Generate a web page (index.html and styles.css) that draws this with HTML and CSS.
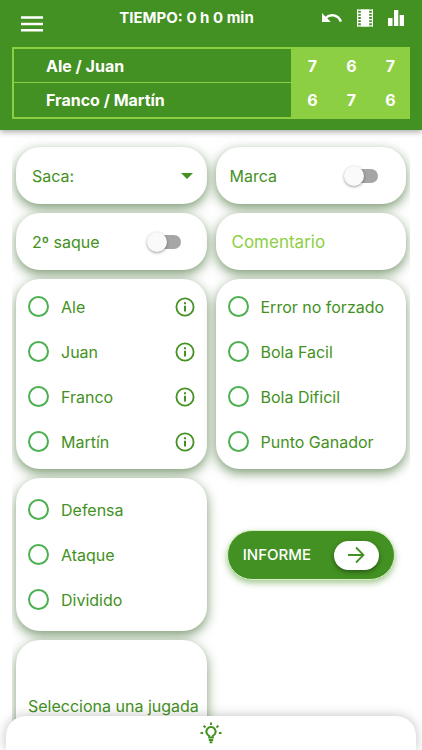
FILE: index.html
```
<!DOCTYPE html>
<html lang="es">

<head>
    <meta charset="UTF-8">
    <meta name="viewport" content="width=device-width, initial-scale=1.0">
    <title>Partido</title>
    <link rel="stylesheet" href="styles.css">
</head>

<body>
    <header class="header">
        <div class="toolbar">
            <button class="icon-btn menu-btn" aria-label="Menú">
                <svg width="22" height="16" viewBox="0 0 22 16"><path d="M0 1.5h22M0 8h22M0 14.2h22" stroke="currentColor" stroke-width="2.4"/></svg>
            </button>
            <h1 class="time">TIEMPO: 0 h 0 min</h1>
            <div class="actions">
                <button class="icon-btn" aria-label="Deshacer">
                    <svg width="20" height="24" viewBox="2 0 20.5 24"><path fill="currentColor" d="M12.5 8c-2.65 0-5.05.99-6.9 2.6L2 7v9h9l-3.62-3.62c1.39-1.16 3.16-1.88 5.12-1.88 3.54 0 6.55 2.31 7.6 5.5l2.37-.78C21.08 11.03 17.15 8 12.5 8z"/></svg>
                </button>
                <button class="icon-btn" aria-label="Video">
                    <svg width="16" height="18" viewBox="0 0 16 18">
                        <path fill="currentColor" d="M3.8 .5h8.400v17h-8.400z"/>
                        <path d="M.6 .5v17M15.4 .5v17" stroke="currentColor" stroke-width="1.2"/>
                        <path d="M0 1.200h16M0 4.300h16M0 7.400h16M0 10.600h16M0 13.700h16M0 16.800h16" stroke="currentColor" stroke-width="1.2"/>
                    </svg>
                </button>
                <button class="icon-btn" aria-label="Estadísticas">
                    <svg width="16" height="16" viewBox="0 0 16 16"><path fill="currentColor" d="M0 8h4.5v8H0zM6 0h4.3v16H6zM11.7 5H16v11h-4.3z"/></svg>
                </button>
            </div>
        </div>
        <table class="score">
            <tr>
                <th scope="row">Ale / Juan</th>
                <td>7</td>
                <td>6</td>
                <td>7</td>
            </tr>
            <tr>
                <th scope="row">Franco / Martín</th>
                <td>6</td>
                <td>7</td>
                <td>6</td>
            </tr>
        </table>
    </header>

    <main class="content">
        <div class="column">
            <div class="card field saca">
                <select class="select" aria-label="Saca">
                    <option>Saca:</option>
                    <option>Ale</option>
                    <option>Juan</option>
                    <option>Franco</option>
                    <option>Martín</option>
                </select>
                <svg class="caret" width="12" height="6" viewBox="0 0 12 6"><path fill="currentColor" d="M0 0h12L6 6z"/></svg>
            </div>
            <label class="card field second">
                <span>2º saque</span>
                <input class="toggle" type="checkbox">
            </label>
            <div class="card options">
                <div class="option">
                    <label><input type="radio" name="jugador">Ale</label>
                    <button class="info" aria-label="Info Ale"><svg width="20" height="20" viewBox="0 0 20 20"><use href="#info"/></svg></button>
                </div>
                <div class="option">
                    <label><input type="radio" name="jugador">Juan</label>
                    <button class="info" aria-label="Info Juan"><svg width="20" height="20" viewBox="0 0 20 20"><use href="#info"/></svg></button>
                </div>
                <div class="option">
                    <label><input type="radio" name="jugador">Franco</label>
                    <button class="info" aria-label="Info Franco"><svg width="20" height="20" viewBox="0 0 20 20"><use href="#info"/></svg></button>
                </div>
                <div class="option">
                    <label><input type="radio" name="jugador">Martín</label>
                    <button class="info" aria-label="Info Martín"><svg width="20" height="20" viewBox="0 0 20 20"><use href="#info"/></svg></button>
                </div>
            </div>
            <div class="card options tall">
                <div class="option"><label><input type="radio" name="tipo">Defensa</label></div>
                <div class="option"><label><input type="radio" name="tipo">Ataque</label></div>
                <div class="option"><label><input type="radio" name="tipo">Dividido</label></div>
            </div>
            <div class="card play">Selecciona una jugada</div>
        </div>

        <div class="column">
            <label class="card field mark">
                <span>Marca</span>
                <input class="toggle" type="checkbox">
            </label>
            <div class="card field">
                <input class="comment" type="text" placeholder="Comentario" aria-label="Comentario">
            </div>
            <div class="card options">
                <div class="option"><label><input type="radio" name="punto">Error no forzado</label></div>
                <div class="option"><label><input type="radio" name="punto">Bola Facil</label></div>
                <div class="option"><label><input type="radio" name="punto">Bola Dificil</label></div>
                <div class="option"><label><input type="radio" name="punto">Punto Ganador</label></div>
            </div>
            <button class="report">
                INFORME
                <span class="report-arrow">
                    <svg width="18" height="18" viewBox="0 0 18 18"><path d="M1 9h15M9 1.5L16.5 9 9 16.5" fill="none" stroke="currentColor" stroke-width="1.8"/></svg>
                </span>
            </button>
        </div>
    </main>

    <footer class="bottom-bar">
        <button class="icon-btn" aria-label="Consejos">
            <svg width="22" height="22" viewBox="0 0 22 22" fill="none" stroke="currentColor" stroke-width="2">
                <path d="M9.200 15.500v-1.600a4.600 4.600 0 1 1 3.600 0v1.600zM8.800 18h4.400M9.600 20.300h2.800"/>
                <path d="M11 .5v2.500M.5 11h2.600M18.900 11h2.600M3.600 3.600l1.900 1.900M18.400 3.600l-1.900 1.900"/>
            </svg>
        </button>
    </footer>

    <svg width="0" height="0" class="symbols">
        <symbol id="info" viewBox="0 0 20 20">
            <circle cx="10" cy="10" r="8.6" fill="none" stroke="currentColor" stroke-width="1.8"/>
            <path d="M10 5.2v2M10 8.8v5.8" stroke="currentColor" stroke-width="2"/>
        </symbol>
    </svg>
</body>

</html>
```

FILE: styles.css
```
* {
    box-sizing: border-box;
}

body {
    margin: 0;
    height: 100vh;
    overflow: hidden;
    display: flex;
    flex-direction: column;
    font-family: Inter, "Liberation Sans", sans-serif;
    font-size: 16px;
    line-height: 20px;
    color: #439122;
    background: #fff;
}

button,
input,
select {
    font: inherit;
    color: inherit;
}

button {
    padding: 0;
    border: none;
    background: none;
    cursor: pointer;
}

svg {
    display: block;
}

.header {
    flex: none;
    padding: 0 12px 11px;
    color: #fff;
    background: #439122;
    box-shadow: 0 2px 6px rgba(0, 0, 0, 0.35);
    z-index: 1;
}

.toolbar {
    display: flex;
    align-items: center;
    justify-content: space-between;
    height: 47px;
    padding: 0 6px 0 9px;
}

.menu-btn {
    width: 30px;
}

.time {
    margin: 0;
    padding-bottom: 11px;
    font-size: 15px;
    font-weight: 700;
}

.actions {
    display: flex;
    align-items: center;
    gap: 15px;
    padding-bottom: 11px;
}

.score {
    width: 100%;
    border: 2px solid #8dcf42;
    border-spacing: 0;
    font-weight: 700;
}

.score th,
.score td {
    height: 34px;
    padding: 0;
}

.score th {
    padding-left: 32px;
    text-align: left;
}

.score tr:first-child th {
    border-bottom: 1px solid #8dcf42;
}

.score td {
    width: 39px;
    padding-left: 4px;
    text-align: center;
    background: #8dcf42;
}

.content {
    flex: 1;
    min-height: 0;
    display: grid;
    grid-template-columns: repeat(2, minmax(0, 1fr));
    gap: 9px;
    margin: 0 12px;
    padding: 17px 4px 0;
    overflow: hidden;
}

.column {
    display: flex;
    flex-direction: column;
    gap: 9px;
}

.card {
    flex: none;
    border-radius: 24px;
    background: #fff;
    box-shadow: 0 4px 12px rgba(34, 85, 17, 0.6);
}

.field {
    display: flex;
    align-items: center;
    justify-content: space-between;
    height: 57px;
    padding: 0 16px;
}

.saca {
    padding-right: 14px;
}

.second {
    padding-right: 26px;
}

.mark {
    padding: 0 28px 0 14px;
}

.select {
    flex: 1;
    min-width: 0;
    padding: 0;
    border: none;
    outline: none;
    background: none;
    appearance: none;
}

.comment {
    width: 100%;
    padding: 0;
    border: none;
    outline: none;
    font-size: 17px;
    background: none;
}

.comment::placeholder {
    color: #8dcf42;
    opacity: 1;
}

.toggle {
    position: relative;
    width: 32px;
    height: 14px;
    margin: 0;
    border-radius: 7px;
    background: #a6a6a6;
    appearance: none;
}

.toggle::before {
    content: "";
    position: absolute;
    top: -3px;
    left: -2px;
    width: 20px;
    height: 20px;
    border-radius: 50%;
    background: #fafafa;
    box-shadow: 0 1px 3px rgba(0, 0, 0, 0.4);
}

.toggle:checked::before {
    left: 14px;
    background: #439122;
}

.options {
    padding: 5px 12px;
}

.tall {
    padding: 9px 12px;
}

.option {
    display: flex;
    align-items: center;
    justify-content: space-between;
    height: 45px;
}

.option label {
    display: flex;
    align-items: center;
    gap: 12px;
}

.option input {
    width: 21px;
    height: 21px;
    margin: 0;
    border: 2px solid #4caf50;
    border-radius: 50%;
    appearance: none;
}

.option input:checked {
    background: radial-gradient(#4caf50 50%, transparent 55%);
}

.play {
    padding: 56px 12px;
    white-space: nowrap;
}

.report {
    align-self: center;
    display: flex;
    align-items: center;
    justify-content: space-between;
    width: 168px;
    height: 50px;
    margin-top: 52px;
    padding: 0 15px;
    border: 1px solid #d9efc5;
    border-radius: 25px;
    color: #fff;
    font-size: 15px;
    font-weight: 500;
    background: #439122;
    box-shadow: 0 3px 6px rgba(67, 145, 34, 0.5);
}

.report-arrow {
    display: flex;
    align-items: center;
    justify-content: center;
    width: 45px;
    height: 29px;
    border-radius: 15px;
    color: #439122;
    background: #fff;
    box-shadow: 0 2px 5px rgba(0, 0, 0, 0.4);
}

.bottom-bar {
    position: fixed;
    right: 6px;
    bottom: 0;
    left: 6px;
    z-index: 2;
    display: flex;
    justify-content: center;
    height: 34px;
    padding-top: 6px;
    border-radius: 20px 20px 0 0;
    color: #439122;
    background: #fff;
    box-shadow: 0 0 12px rgba(0, 0, 0, 0.25);
}

.bottom-bar .icon-btn {
    align-self: flex-start;
}

.symbols {
    position: absolute;
}
```
